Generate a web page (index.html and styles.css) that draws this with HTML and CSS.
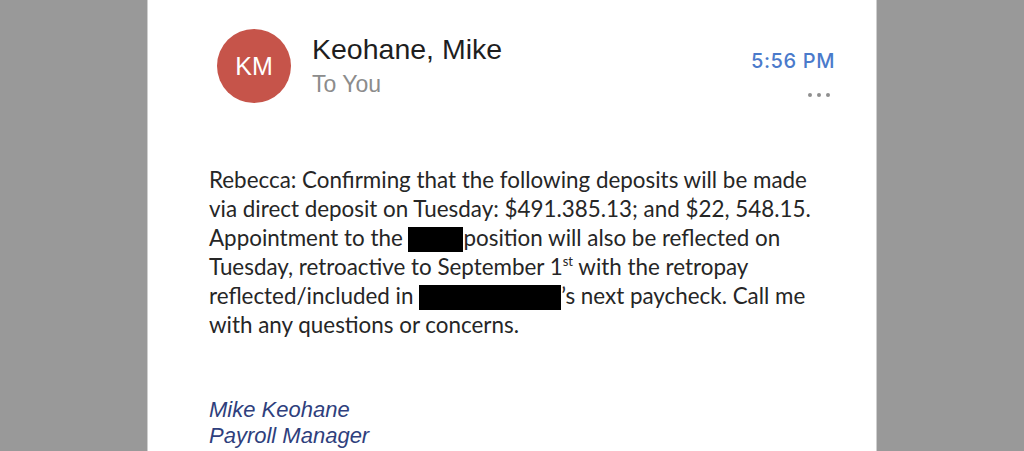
FILE: index.html
```html
<!DOCTYPE html>
<html>
<head>
<meta charset="utf-8">
<link rel="stylesheet" href="styles.css">
</head>
<body>
<div class="panel">
  <div class="header">
    <div class="avatar">KM</div>
    <div class="who">
      <div class="name">Keohane, Mike</div>
      <div class="to">To You</div>
    </div>
    <div class="meta">
      <div class="time">5:56 PM</div>
      <div class="dots"><span></span><span></span><span></span></div>
    </div>
  </div>
  <div class="message">
    <div class="line">Rebecca: Confirming that the following deposits will be made</div>
    <div class="line">via direct deposit on Tuesday: $491.385.13; and $22, 548.15.</div>
    <div class="line">Appointment to the <span class="redact r1"></span>position will also be reflected on</div>
    <div class="line">Tuesday, retroactive to September 1<sup>st</sup> with the retropay</div>
    <div class="line">reflected/included in <span class="redact r2"></span>’s next paycheck. Call me</div>
    <div class="line">with any questions or concerns.</div>
  </div>
  <div class="signature">
    <div>Mike Keohane</div>
    <div>Payroll Manager</div>
  </div>
</div>
</body>
</html>
```
FILE: styles.css
```css
html, body {
  margin: 0;
  padding: 0;
  height: 451px;
  overflow: hidden;
  background: #999999;
}
.panel {
  width: 728px;
  margin: 0 0 0 147px;
  background: #ffffff;
  border-left: 1px solid #cfcfcf;
  border-right: 1px solid #cfcfcf;
  height: 451px;
}
.header {
  display: flex;
  align-items: flex-start;
  padding: 29px 41px 0 69px;
}
.avatar {
  width: 74px;
  height: 74px;
  border-radius: 50%;
  background: #c6544a;
  color: #ffffff;
  display: flex;
  align-items: center;
  justify-content: center;
  font-family: "Liberation Sans", Arial, sans-serif;
  font-size: 25px;
  flex-shrink: 0;
}
.who {
  margin-left: 21px;
  flex: 1;
  font-family: "Liberation Sans", Arial, sans-serif;
}
.name {
  font-size: 28.5px;
  color: #1e1e1e;
  line-height: 32px;
  margin-top: 4px;
}
.to {
  font-size: 23px;
  color: #8c8c8c;
  line-height: 28px;
  margin-top: 5px;
}
.meta {
  display: flex;
  flex-direction: column;
  align-items: flex-end;
  font-family: Inter, "Liberation Sans", sans-serif;
}
.time {
  color: #4a7acb;
  font-size: 20px;
  font-weight: 500;
  line-height: 24px;
  margin-top: 20px;
  letter-spacing: 0.6px;
}
.dots {
  display: flex;
  gap: 5px;
  margin-top: 20px;
  margin-right: 5px;
}
.dots span {
  width: 4px;
  height: 4px;
  border-radius: 50%;
  background: #8f8f8f;
}
.message {
  padding: 62px 0 0 61px;
  font-family: Lato, "Open Sans", sans-serif;
  font-size: 22.4px;
  line-height: 29px;
  color: #262626;
}
.line {
  white-space: nowrap;
}
.message sup {
  font-size: 13px;
  line-height: 0;
  vertical-align: 9px;
}
.redact {
  display: inline-block;
  background: #000000;
  height: 25px;
  vertical-align: -6px;
}
.r1 { width: 55px; }
.r2 { width: 142px; }
.signature {
  padding: 58px 0 0 61px;
  font-family: "Liberation Sans", Arial, sans-serif;
  font-style: italic;
  font-size: 22px;
  line-height: 26px;
  color: #2f3f7d;
}
```
